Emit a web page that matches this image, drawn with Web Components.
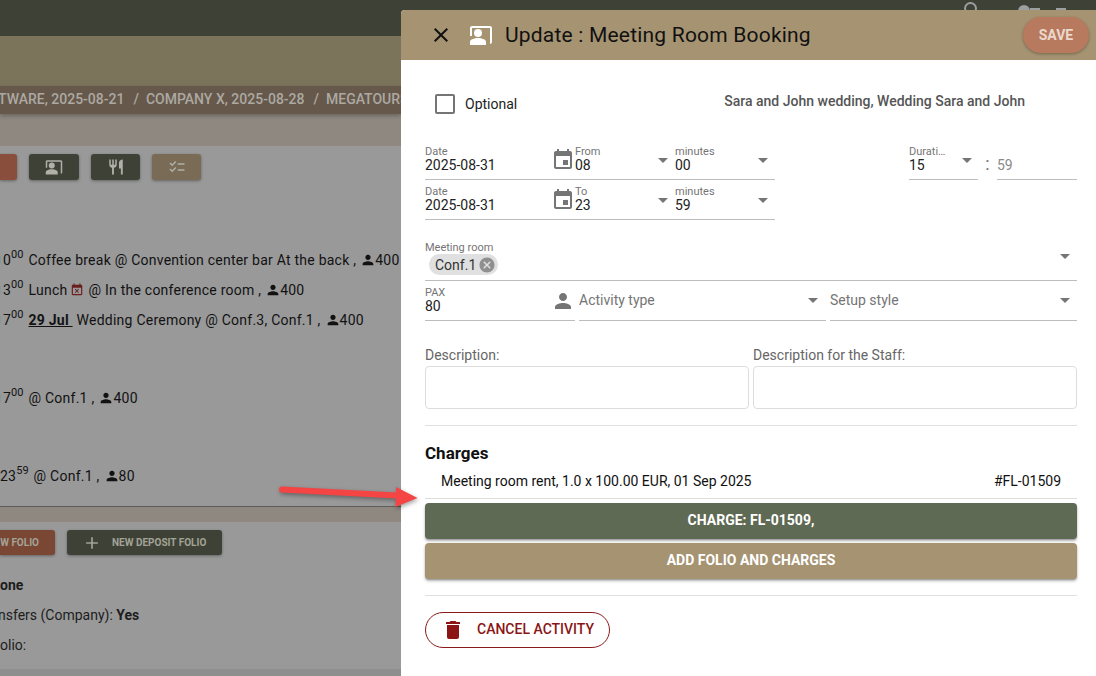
<!doctype html>
<html>
<head>
<meta charset="utf-8">
<title>Update : Meeting Room Booking</title>
<style>
html, body { margin: 0; height: 100%; overflow: hidden; background: #999; }
body { font: 14px Roboto, "Liberation Sans", sans-serif; }
</style>
</head>
<body>
<booking-page>
	<span slot="crumbs" style="margin-left:-2px">TWARE, 2025-08-21<span style="margin:0 7px 0 9px">/</span>COMPANY X, 2025-08-28<span style="margin:0 7px 0 9px">/</span>MEGATOURS</span>
</booking-page>
<update-drawer></update-drawer>
<red-arrow></red-arrow>

<script>
const icons = {
	close: '<path d="M19 6.41L17.59 5 12 10.59 6.41 5 5 6.41 10.59 12 5 17.59 6.41 19 12 13.41 17.59 19 19 17.59 13.41 12z"/>',
	present: '<path d="M21 3H3C1.9 3 1 3.9 1 5v8h2V5h18v16c1.1 0 2-.9 2-2V5c0-1.100-.9-2-2-2z"/><circle cx="9" cy="10" r="4"/><path d="M15.39 16.56C13.71 15.7 11.53 15 9 15s-4.71.7-6.390 1.560C1.610 17.070 1 18.100 1 19.220V22h16v-2.780c0-1.120-.61-2.150-1.610-2.660z"/>',
	event: '<path d="M17 12h-5v5h5v-5zM16 1v2H8V1H6v2H5c-1.110 0-1.990.9-1.990 2L3 19c0 1.100.89 2 2 2h14c1.100 0 2-.9 2-2V5c0-1.100-.9-2-2-2h-1V1h-2zm3 18H5V8h14v11z"/>',
	busy: '<path d="M9.310 17l2.440-2.440L14.190 17l1.060-1.060-2.440-2.440 2.440-2.440L14.190 10l-2.440 2.440L9.310 10l-1.060 1.060 2.440 2.440-2.440 2.440L9.310 17zM19 3h-1V1h-2v2H8V1H6v2H5c-1.110 0-1.990.9-1.990 2L3 19c0 1.100.89 2 2 2h14c1.100 0 2-.9 2-2V5c0-1.100-.9-2-2-2zm0 16H5V8h14v11z"/>',
	person: '<path d="M12 12c2.210 0 4-1.790 4-4s-1.790-4-4-4-4 1.790-4 4 1.790 4 4 4zm0 2c-2.670 0-8 1.340-8 4v2h16v-2c0-2.660-5.330-4-8-4z"/>',
	trash: '<path d="M6 19c0 1.100.9 2 2 2h8c1.100 0 2-.9 2-2V7H6v12zM19 4h-3.500l-1-1h-5l-1 1H5v2h14V4z"/>',
	food: '<path d="M11 9H9V2H7v7H5V2H3v7c0 2.120 1.660 3.840 3.750 3.970V22h2.500v-9.030C11.340 12.840 13 11.120 13 9V2h-2v7zm5-3v8h2.500v8H21V2c-2.760 0-5 2.240-5 4z"/>',
	checks: '<path d="M22 7h-9v2h9V7zm0 8h-9v2h9v-2zM5.540 11L2 7.460l1.410-1.410 2.120 2.120 4.240-4.240 1.410 1.410L5.540 11zm0 8L2 15.460l1.410-1.410 2.120 2.120 4.240-4.240 1.410 1.410L5.540 19z"/>',
	cancel: '<path d="M12 2C6.470 2 2 6.470 2 12s4.470 10 10 10 10-4.470 10-10S17.530 2 12 2zm5 13.590L15.590 17 12 13.410 8.410 17 7 15.590 10.590 12 7 8.410 8.410 7 12 10.590 15.590 7 17 8.410 13.410 12 17 15.590z"/>',
	add: '<path d="M19 13h-6v6h-2v-6H5v-2h6V5h2v6h6v2z"/>',
};

const svg = (name, size, extra = '') =>
	`<svg ${extra} width="${size}" height="${size}" viewBox="0 0 24 24" fill="currentColor" style="display:block;flex:none">${icons[name]}</svg>`;


class FormField extends HTMLElement {

	constructor () {
		super();
		const label = this.getAttribute('label');
		const placeholder = this.hasAttribute('placeholder');
		const caret = this.hasAttribute('caret') ? '<i class="caret"></i>' : '';
		this.attachShadow({ mode: 'open' }).innerHTML = `<style>
			:host { display: block; min-width: 0; height: 40px; box-sizing: border-box; }
			.wrap { display: flex; height: 100%; box-sizing: border-box; padding-top: 5px; }
			.col { flex: 1; min-width: 0; }
			.label { font-size: 11px; line-height: 14px; height: 12px; color: #757575; white-space: nowrap; }
			.value { font-size: 14px; line-height: 16px; color: var(--value-color, #222); white-space: nowrap; }
			.placeholder .label { height: 6px; }
			.placeholder .value { color: #757575; }
			.caret { flex: none; width: 0; height: 0; margin: var(--caret-top, 13px) var(--caret-right, 7px) 0 0;
				border: 5px solid transparent; border-top-color: #757575; border-bottom: 0; }
		</style>
		<div class="wrap ${placeholder ? 'placeholder' : ''}">
			<div class="col">
				<div class="label">${label || ''}</div>
				<div class="value"><slot></slot></div>
			</div>
			${caret}
		</div>`;
	}

}


class ActionButton extends HTMLElement {

	constructor () {
		super();
		this.attachShadow({ mode: 'open' }).innerHTML = `<style>
			:host { display: flex; align-items: center; justify-content: center; box-sizing: border-box;
				height: 36px; padding-bottom: 2px; border-radius: 4px; color: #fff; font-size: 14px; font-weight: 700;
				background: var(--bg); box-shadow: 0 2px 3px rgba(0,0,0,.3), 0 1px 1px rgba(0,0,0,.15); }
		</style><slot></slot>`;
	}

}


class BookingPage extends HTMLElement {

	constructor () {
		super();
		const who = size => svg('person', size, 'class="who"');
		this.attachShadow({ mode: 'open' }).innerHTML = `<style>
			:host { display: block; height: 676px; overflow: hidden; color: #121212; }
			.top { height: 36px; background: #3e4236; display: flex; justify-content: flex-end; color: #9aa0a0; overflow: hidden; }
			.top .ring { width: 9px; height: 9px; border: 2px solid currentColor; border-radius: 50%; margin: 2px 41px 0 0; }
			.top .blob { width: 12px; height: 12px; border-radius: 50%; background: currentColor; margin: 5px 0 0 0; }
			.top .bar { width: 10px; height: 4px; background: currentColor; margin: 8px 16px 0 0; }
			.top .end { width: 10px; height: 4px; background: currentColor; margin: 8px 30px 0 0; }
			.sub { height: 50px; background: #7b735a; }
			.crumbs { width: 401px; height: 28px; background: #66584a; color: #aca9a3; font-weight: 500; line-height: 27px;
				white-space: nowrap; overflow: hidden; box-shadow: 0 2px 4px rgba(0,0,0,.25); position: relative; }
			.strip { background: #8e8881; }
			.card { background: #999; }
			.tools { display: flex; gap: 12px; height: 26px; padding-top: 8px; }
			.tool { width: 49px; border-radius: 3px; color: #b0b0a8; background: #3e4236; display: flex;
				align-items: center; justify-content: center; box-shadow: 0 1px 3px rgba(0,0,0,.35); }
			.tool.first { width: 50px; }
			.tool.red { width: 17px; background: #8a4f3c; border-radius: 0 3px 3px 0; }
			.tool.tan { background: #7a6b56; }
			.line { height: 30px; line-height: 30px; padding-left: 3px; white-space: nowrap; display: flex; align-items: center; letter-spacing: .24px; }
			.line sup { font-size: 11px; line-height: 0; position: relative; top: -5px; vertical-align: baseline; margin-right: 5px; letter-spacing: 0; }
			.mark { width: 1px; height: 8px; background: #7f9a98; margin-left: -3px; margin-right: 2px; }
			.who { margin: 0 -1px 0 4px; }
			.busy { margin: 0 4px 0 3px; color: #6a1f1f; }
			b.date { text-decoration: underline; font-weight: 700; margin-right: 4px; white-space: pre; }
			.folio { display: flex; gap: 12px; height: 25px; padding-top: 8px; font-size: 10px; font-weight: 700; color: #a3a397; white-space: nowrap; }
			.folio div { border-radius: 3px; display: flex; align-items: center; box-shadow: 0 1px 3px rgba(0,0,0,.35); }
			.folio .red { width: 55px; background: #7a4734; border-radius: 0 3px 3px 0; justify-content: flex-end; padding-right: 16px; box-sizing: border-box; }
			.folio .green { width: 155px; background: #3e4236; padding-left: 15px; gap: 10px; box-sizing: border-box; }
			.info { height: 30px; line-height: 30px; white-space: nowrap; color: #1d1d1d; }
			.info.shift { margin-left: -2px; }
			.bottom { height: 7px; background: #8e8e8e; }
		</style>
		<div class="top"><span class="ring"></span><span class="blob"></span><span class="bar"></span><span class="end"></span></div>
		<div class="sub"></div>
		<div class="crumbs"><slot name="crumbs"></slot></div>
		<div class="strip" style="height:32px"></div>
		<div class="card" style="height:360px">
			<div class="tools">
				<div class="tool red"></div>
				<div class="tool first">${svg('present', 18)}</div>
				<div class="tool">${svg('food', 18)}</div>
				<div class="tool tan">${svg('checks', 18)}</div>
			</div>
			<div style="height:65px"></div>
			<div class="line"><i class="mark"></i>0<sup>00</sup>Coffee break @ Convention center bar At the back , ${who(16)}400</div>
			<div class="line"><i class="mark"></i>3<sup>00</sup>Lunch ${svg('busy', 14, 'class="busy"')}@ In the conference room , ${who(16)}400</div>
			<div class="line"><i class="mark"></i>7<sup>00</sup><b class="date">29 Jul </b>Wedding Ceremony @ Conf.3, Conf.1 , ${who(16)}400</div>
			<div style="height:48px"></div>
			<div class="line"><i class="mark"></i>7<sup>00</sup>@ Conf.1 , ${who(16)}400</div>
			<div style="height:48px"></div>
			<div class="line" style="padding-left:0">23<sup>59</sup>@ Conf.1 , ${who(16)}80</div>
		</div>
		<div class="strip" style="height:16px;border-top:1px solid #5c5c58;box-sizing:border-box"></div>
		<div class="card" style="height:147px">
			<div class="folio">
				<div class="red">W FOLIO</div>
				<div class="green">${svg('add', 20)}<span>NEW DEPOSIT FOLIO</span></div>
			</div>
			<div style="height:15px"></div>
			<div class="info"><b>one</b></div>
			<div class="info shift">nsfers (Company): <b>Yes</b></div>
			<div class="info">olio:</div>
		</div>
		<div class="bottom"></div>`;
	}

}


class UpdateDrawer extends HTMLElement {

	constructor () {
		super();
		this.attachShadow({ mode: 'open' }).innerHTML = `<style>
			:host { display: block; position: absolute; left: 401px; top: 10px; right: 0; bottom: 0;
				background: #fff; color: #222; border-radius: 4px 0 0 0; overflow: hidden; }
			header { height: 50px; background: #a59372; display: flex; align-items: center; color: #111; }
			.x { margin-left: 28px; }
			.pic { margin-left: 16px; color: #fff; }
			h1 { font-size: 21px; font-weight: 400; margin: 0 0 0 12px; flex: 1; letter-spacing: .2px; }
			.save { width: 66px; height: 36px; margin: -1px 7px 0 0; border-radius: 18px; background: #b87a5e;
				color: #ecd8cd; font-weight: 700; display: flex; align-items: center; justify-content: center;
				box-shadow: 0 1px 3px rgba(0,0,0,.3); }
			main { padding: 0 19px 0 24px; }
			.intro { height: 80px; display: flex; box-sizing: border-box; padding-top: 34px; }
			.check { width: 16px; height: 16px; border: 2px solid #757575; border-radius: 2px; margin-left: 10px; }
			.opt { margin-left: 10px; line-height: 20px; color: #222; }
			.who { margin-left: auto; margin-right: 52px; margin-top: -2px; line-height: 18px; color: #555; font-weight: 500; }
			.times { display: flex; height: 40px; }
			.group { width: 350px; display: flex; box-sizing: border-box; border-bottom: 1px solid #bdbdbd; }
			.date { width: 126px; }
			.cal { width: 24px; color: #757575; padding-top: 8px; box-sizing: border-box; }
			.from, .min { width: 100px; }
			.dur { width: 69px; margin-left: 134px; border-bottom: 1px solid #bdbdbd; --caret-right: 6px; box-sizing: border-box; }
			.colon { width: 19px; text-align: center; line-height: 48px; font-size: 18px; color: #757575; }
			.rest { width: 80px; border-bottom: 1px solid #bdbdbd; box-sizing: border-box; --value-color: #8a8a8a; }
			.room { margin-top: 20px; height: 41px; border-bottom: 1px solid #bdbdbd; box-sizing: border-box; padding-top: 1px; display: flex; }
			.room .col { flex: 1; }
			.room .label { font-size: 11px; line-height: 14px; height: 12px; color: #757575; }
			.chip { display: inline-flex; align-items: center; height: 21px; margin: 1px 0 0 4px; padding-left: 6px; padding-right: 2px;
				border-radius: 11px; background: #e0e0e0; color: #333; }
			.chip svg { color: #8f8f8f; margin-left: 2px; }
			.room .caret { width: 0; height: 0; margin: 13px 7px 0 0; border: 5px solid transparent; border-top-color: #757575; border-bottom: 0; }
			.pax { display: flex; gap: 4px; height: 40px; }
			.pax > * { border-bottom: 1px solid #bdbdbd; box-sizing: border-box; --caret-top: 12px; }
			.paxcell { width: 150px; display: flex; }
			.paxcell form-field { flex: 1; }
			.paxcell div { color: #757575; padding-top: 8px; }
			.act { width: 247px; --caret-right: 8px; }
			.setup { flex: 1; }
			.notes { display: grid; grid-template-columns: 324px 324px; gap: 3px 4px; margin-top: 26px; }
			.notes label { line-height: 16px; color: #666; }
			.notes div { grid-row: 2; height: 43px; border: 1px solid #ddd; border-radius: 4px; box-sizing: border-box; }
			hr { border: 0; border-top: 1px solid #e0e0e0; margin: 16px 0 0; }
			h2 { font-size: 17px; line-height: 20px; font-weight: 700; margin: 17px 0 0; color: #111; }
			.charge { height: 36px; display: flex; justify-content: space-between; align-items: center; padding: 0 16px; box-sizing: border-box; color: #111; border-bottom: 1px solid #ddd; }
			.btns { display: grid; gap: 4px; margin-top: 4px; }
			.cancel { display: inline-flex; align-items: center; height: 36px; width: 185px; margin-top: 16px; box-sizing: border-box;
				border: 1px solid #8b1a1a; border-radius: 18px; color: #8b1515; font-weight: 500; padding-left: 15px; gap: 12px; }
			.cancel span { padding-bottom: 2px; }
		</style>
		<header>
			${svg('close', 24, 'class="x"')}
			${svg('present', 24, 'class="pic"')}
			<h1>Update : Meeting Room Booking</h1>
			<div class="save">SAVE</div>
		</header>
		<main>
			<div class="intro">
				<div class="check"></div>
				<div class="opt">Optional</div>
				<div class="who">Sara and John wedding, Wedding Sara and John</div>
			</div>
			<div class="times">
				<div class="group">
					<form-field class="date" label="Date">2025-08-31</form-field>
					<div class="cal">${svg('event', 24)}</div>
					<form-field class="from" label="From" caret>08</form-field>
					<form-field class="min" label="minutes" caret>00</form-field>
				</div>
				<form-field class="dur" label="Durati…" caret>15</form-field>
				<div class="colon">:</div>
				<form-field class="rest">59</form-field>
			</div>
			<div class="times">
				<div class="group">
					<form-field class="date" label="Date">2025-08-31</form-field>
					<div class="cal">${svg('event', 24)}</div>
					<form-field class="from" label="To" caret>23</form-field>
					<form-field class="min" label="minutes" caret>59</form-field>
				</div>
			</div>
			<div class="room">
				<div class="col">
					<div class="label">Meeting room</div>
					<span class="chip">Conf.1${svg('cancel', 18)}</span>
				</div>
				<i class="caret"></i>
			</div>
			<div class="pax">
				<div class="paxcell">
					<form-field label="PAX">80</form-field>
					<div>${svg('person', 24)}</div>
				</div>
				<form-field class="act" placeholder caret>Activity type</form-field>
				<form-field class="setup" placeholder caret>Setup style</form-field>
			</div>
			<div class="notes">
				<label>Description:</label>
				<label>Description for the Staff:</label>
				<div></div>
				<div></div>
			</div>
			<hr>
			<h2>Charges</h2>
			<div class="charge"><span>Meeting room rent, 1.0 x 100.00 EUR, 01 Sep 2025</span><span>#FL-01509</span></div>
			<div class="btns">
				<action-button style="--bg:#5f6a54">CHARGE: FL-01509,</action-button>
				<action-button style="--bg:#a59372">ADD FOLIO AND CHARGES</action-button>
			</div>
			<hr>
			<div class="cancel">${svg('trash', 24)}<span>CANCEL ACTIVITY</span></div>
		</main>`;
	}

}


// annotation drawn over the screenshot
class RedArrow extends HTMLElement {

	constructor () {
		super();
		this.attachShadow({ mode: 'open' }).innerHTML = `<style>
			:host { display: block; position: absolute; left: 275px; top: 480px; width: 150px; height: 32px; }
			svg { display: block; filter: drop-shadow(1px 2px 2px rgba(0,0,0,.35)); }
		</style>
		<svg width="150" height="32" viewBox="0 0 150 32">
			<path d="M7 9.500 L122 15.500" stroke="#f44444" stroke-width="6" stroke-linecap="round" fill="none"/>
			<path d="M121 7 L142.500 18 L120.500 27 Z" fill="#f44444"/>
		</svg>`;
	}

}

customElements.define('form-field', FormField);
customElements.define('action-button', ActionButton);
customElements.define('booking-page', BookingPage);
customElements.define('update-drawer', UpdateDrawer);
customElements.define('red-arrow', RedArrow);
</script>
</body>
</html>
